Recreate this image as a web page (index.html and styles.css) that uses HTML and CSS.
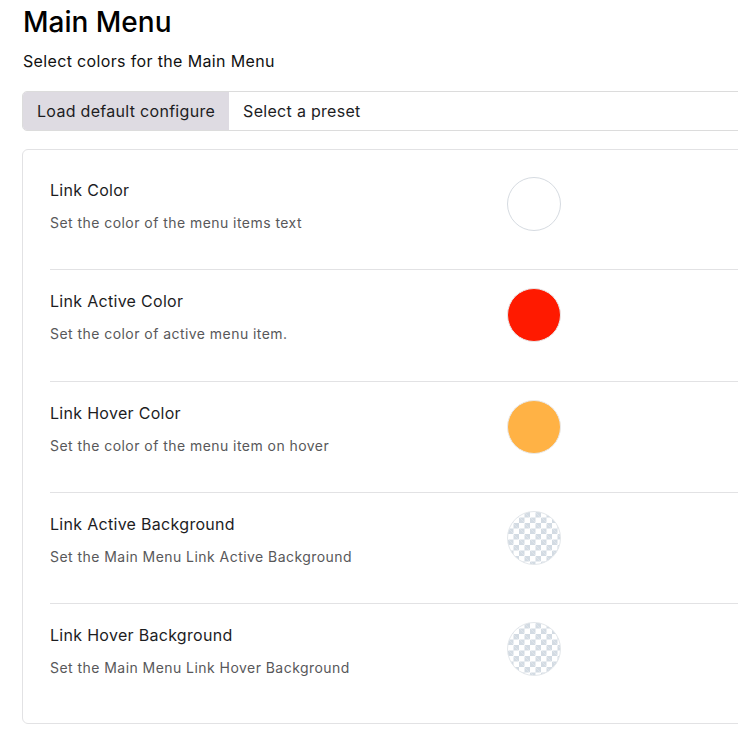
FILE: index.html
```html
<!DOCTYPE html>
<html>
<head>
<meta charset="utf-8">
<link rel="stylesheet" href="styles.css">
</head>
<body>
<div class="page">
  <h1 class="title">Main Menu</h1>
  <p class="subtitle">Select colors for the Main Menu</p>
  <div class="btn-group">
    <button class="btn btn-active">Load default configure</button>
    <button class="btn btn-preset">Select a preset</button>
  </div>
  <div class="card">
    <div class="row">
      <div class="info">
        <div class="label">Link Color</div>
        <div class="desc">Set the color of the menu items text</div>
      </div>
      <div class="swatch swatch-white"></div>
    </div>
    <div class="row">
      <div class="info">
        <div class="label">Link Active Color</div>
        <div class="desc">Set the color of active menu item.</div>
      </div>
      <div class="swatch swatch-red"></div>
    </div>
    <div class="row">
      <div class="info">
        <div class="label">Link Hover Color</div>
        <div class="desc">Set the color of the menu item on hover</div>
      </div>
      <div class="swatch swatch-orange"></div>
    </div>
    <div class="row">
      <div class="info">
        <div class="label">Link Active Background</div>
        <div class="desc">Set the Main Menu Link Active Background</div>
      </div>
      <div class="swatch swatch-clear"></div>
    </div>
    <div class="row">
      <div class="info">
        <div class="label">Link Hover Background</div>
        <div class="desc">Set the Main Menu Link Hover Background</div>
      </div>
      <div class="swatch swatch-clear"></div>
    </div>
  </div>
</div>
</body>
</html>
```
FILE: styles.css
```css
html, body {
  margin: 0;
  padding: 0;
  background: #ffffff;
  overflow: hidden;
}
body {
  font-family: Inter, "Liberation Sans", Arial, sans-serif;
  color: #1d1d1f;
}
.page {
  padding: 5px 0 0 22px;
  width: 800px;
}
.title {
  margin: 0;
  font-size: 28px;
  line-height: 34px;
  font-weight: 500;
  color: #000;
  padding-left: 1px;
}
.subtitle {
  margin: 11px 0 0 1px;
  font-size: 16px;
  line-height: 22px;
  color: #111;
  letter-spacing: 0.35px;
}
.btn-group {
  display: flex;
  margin-top: 19px;
  height: 40px;
  box-sizing: border-box;
  border: 1px solid #dcdcdc;
  border-radius: 5px 0 0 5px;
  overflow: hidden;
}
.btn {
  font-family: inherit;
  font-size: 16px;
  letter-spacing: 0.3px;
  color: #1d1d1f;
  border: 0;
  margin: 0;
  padding: 0 14px;
  background: #fff;
}
.btn-active {
  background: #dedbe2;
  padding-left: 14px;
}
.btn-preset {
  flex: 1;
  text-align: left;
}
.card {
  margin-top: 18px;
  border: 1px solid #e2e2e4;
  border-radius: 6px 0 0 6px;
  padding: 9px 0 9px 27px;
}
.row {
  display: grid;
  grid-template-columns: 457px 54px;
  align-items: start;
  padding: 19px 0 36.25px;
  border-bottom: 1px solid #e2e2e4;
}
.row:last-child {
  border-bottom: 0;
}
.label {
  font-size: 16px;
  line-height: 24px;
  color: #1d1d1f;
  letter-spacing: 0.3px;
}
.desc {
  margin-top: 10px;
  font-size: 14px;
  line-height: 21px;
  color: #58585a;
  letter-spacing: 0.45px;
}
.swatch {
  width: 54px;
  height: 54px;
  border-radius: 50%;
  box-sizing: border-box;
  margin-top: -1px;
}
.swatch-white {
  background: #fff;
  border: 1px solid #d6dbe1;
}
.swatch-red {
  background: #ff1a00;
  border: 1px solid #e9e9ea;
}
.swatch-orange {
  background: #ffb245;
  border: 1px solid #e9e9ea;
}
.swatch-clear {
  border: 1px solid #e3e7eb;
  background-color: #fff;
  background-image:
    linear-gradient(45deg, #d3dbe3 25%, transparent 25%, transparent 75%, #d3dbe3 75%),
    linear-gradient(45deg, #d3dbe3 25%, transparent 25%, transparent 75%, #d3dbe3 75%);
  background-size: 11px 11px;
  background-position: 0 0, 5.5px 5.5px;
}
```
